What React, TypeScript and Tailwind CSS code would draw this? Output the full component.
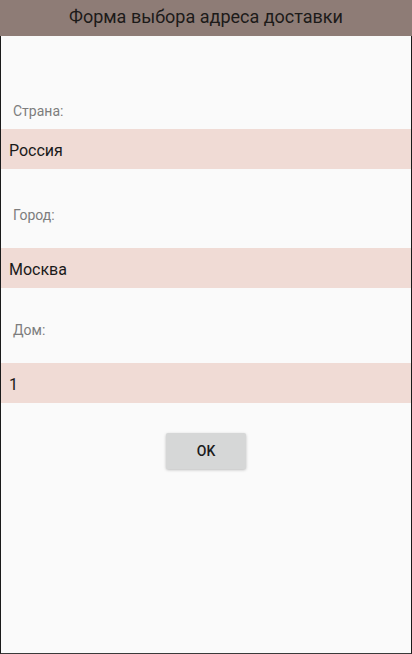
const fields = [
  { label: 'Страна:', value: 'Россия', labelTop: 'mt-[65px]', fieldTop: 'mt-[8px]' },
  { label: 'Город:', value: 'Москва', labelTop: 'mt-[36px]', fieldTop: 'mt-[23px]' },
  { label: 'Дом:', value: '1', labelTop: 'mt-[32px]', fieldTop: 'mt-[23px]' },
]

export default function App() {
  return (
    <div className="flex h-[654px] w-[412px] flex-col bg-[#fafafa] font-['Roboto',sans-serif]">
      <div className="flex h-[36px] shrink-0 items-center justify-center bg-[#8e7c76] pb-[4px] text-[18px] text-[#1c1a19]">
        Форма выбора адреса доставки
      </div>

      <div className="flex flex-1 flex-col border-x border-b border-x-[#1a1a1a] border-b-[#3a3a3a]">
        {fields.map((f) => (
          <div key={f.label} className="flex flex-col">
            <div className={`${f.labelTop} h-[20px] pl-[12px] text-[14px] leading-[20px] text-[#7d7d7d]`}>{f.label}</div>
            <div className={`${f.fieldTop} flex h-[40px] items-center bg-[#f0dbd5] pl-[8px] pt-[3px] text-[16px] text-[#1a1a1a]`}>
              {f.value}
            </div>
          </div>
        ))}

        <div className="mt-[30px] flex justify-center">
          <button className="h-[36px] w-[80px] rounded-[2px] bg-[#d6d7d7] text-[14px] font-medium text-[#1c1c1c] shadow-[0_1px_3px_rgba(0,0,0,0.25)]">
            OK
          </button>
        </div>
      </div>
    </div>
  )
}
